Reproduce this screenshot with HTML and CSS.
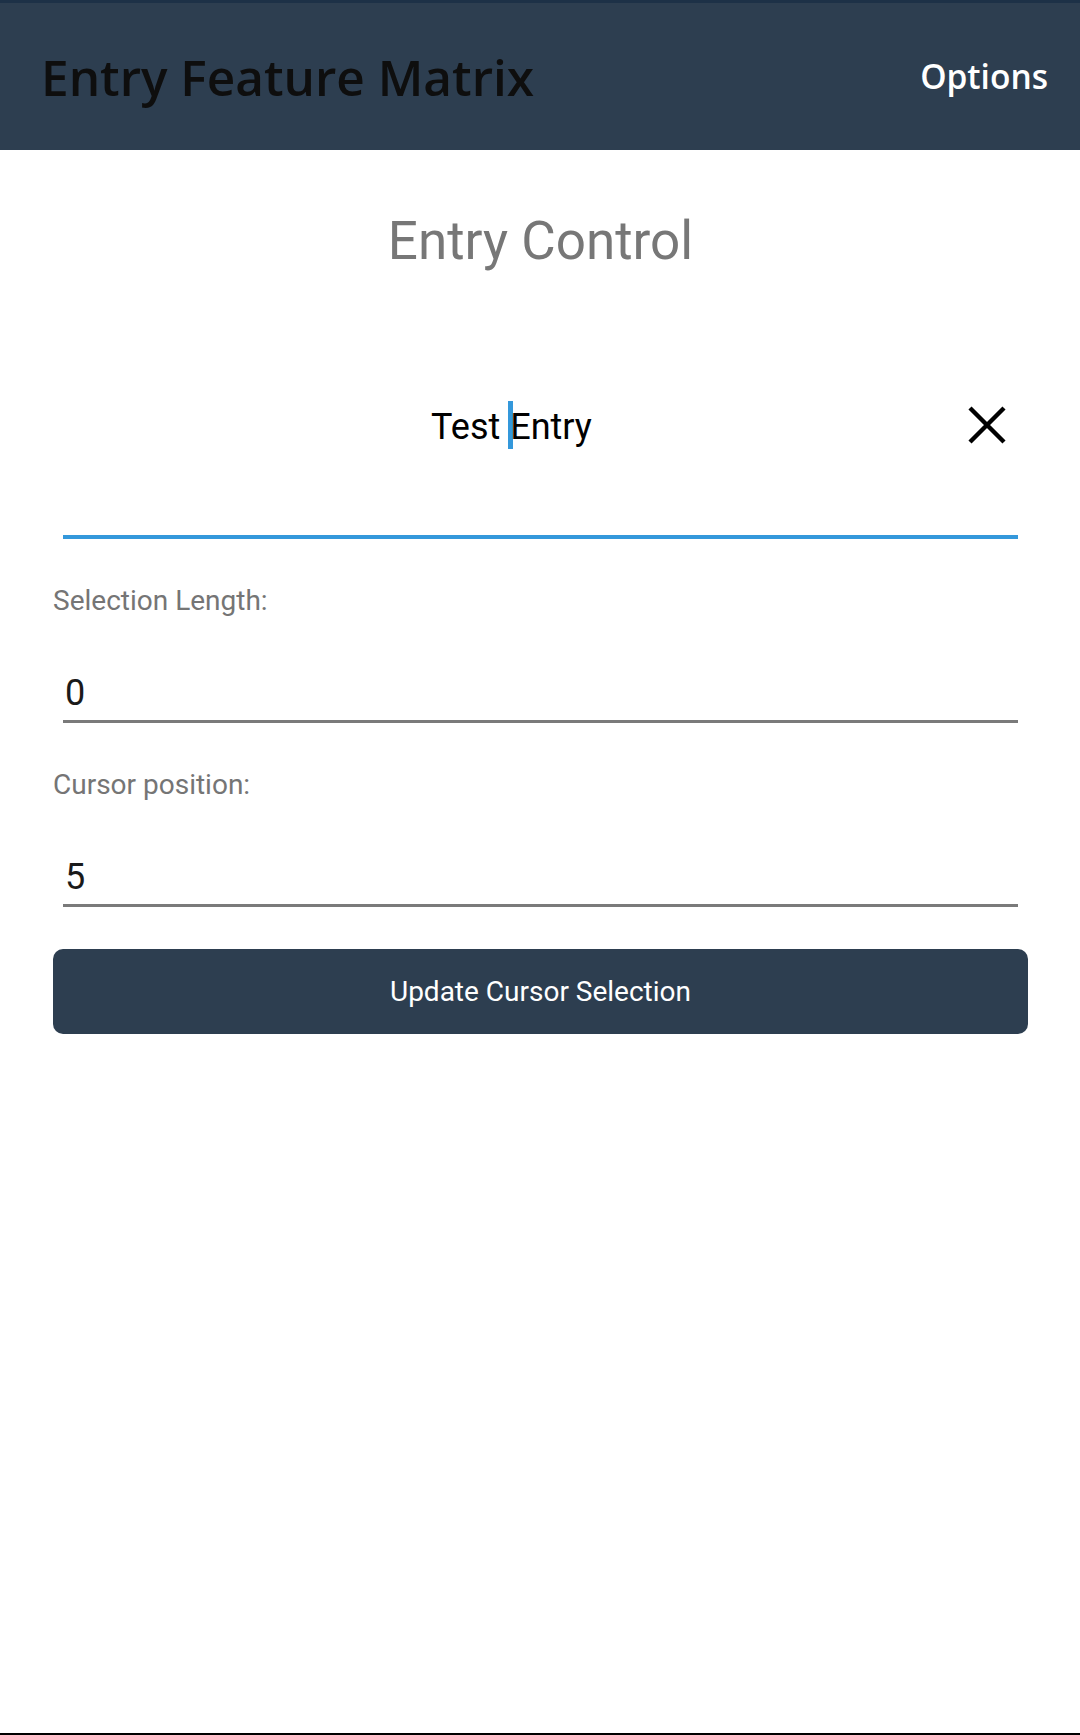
FILE: index.html
```html
<!DOCTYPE html>
<html lang="en">
<head>
<meta charset="utf-8">
<title>Entry Feature Matrix</title>
<link rel="stylesheet" href="styles.css">
</head>
<body>
<div class="page">
  <header class="appbar">
    <h1 class="appbar-title">Entry Feature Matrix</h1>
    <span class="appbar-action">Options</span>
  </header>
  <main class="content">
    <h2 class="heading">Entry Control</h2>
    <div class="entry entry-focused">
      <div class="entry-text">Test <span class="caret"></span>Entry</div>
      <button class="clear-btn" aria-label="Clear">
        <svg width="38" height="38" viewBox="0 0 38 38"><path d="M2 2 L36 36 M36 2 L2 36" stroke="#000" stroke-width="4.4" fill="none"/></svg>
      </button>
    </div>
    <div class="field-label">Selection Length:</div>
    <div class="field-input">0</div>
    <div class="field-label">Cursor position:</div>
    <div class="field-input">5</div>
    <button class="primary-btn">Update Cursor Selection</button>
  </main>
  <div class="bottom-line"></div>
</div>
</body>
</html>
```

FILE: styles.css
```css
* { box-sizing: border-box; }
html, body { margin: 0; padding: 0; background: #fff; }
body { font-family: Roboto, "Noto Sans", sans-serif; }

.page {
  width: 1080px;
  height: 1735px;
  display: flex;
  flex-direction: column;
}

.appbar {
  height: 150px;
  border-top: 3px solid #1d3147;
  background: #2d3e50;
  display: flex;
  align-items: center;
  justify-content: space-between;
  padding: 0 32px 0 41px;
  flex: none;
}
.appbar-title {
  margin: 0;
  font-family: "Open Sans", sans-serif;
  font-weight: 600;
  font-size: 49.5px;
  line-height: 70px;
  color: #0e0e0e;
}
.appbar-action {
  font-family: "Open Sans", sans-serif;
  font-weight: 600;
  font-size: 33.5px;
  line-height: 50px;
  color: #fff;
  margin-top: -2px;
}

.content {
  flex: 1;
  display: flex;
  flex-direction: column;
  padding: 51px 52px 0 53px;
}

.heading {
  margin: 0 0 4px;
  text-align: center;
  font-weight: 400;
  font-size: 53px;
  line-height: 80px;
  color: #777777;
}

.entry {
  margin: 92px 10px 0;
  display: flex;
  align-items: center;
  height: 96px;
  box-sizing: content-box;
  padding-bottom: 62px;
  border-bottom: 4px solid #3498db;
}
.entry-text {
  flex: 1;
  text-align: center;
  font-size: 36px;
  line-height: 96px;
  color: #000;
  padding-left: 6px;
  padding-top: 3px;
}
.caret {
  display: inline-block;
  width: 5px;
  height: 48px;
  background: #3498db;
  vertical-align: -10px;
  margin-left: -1px;
  margin-right: -3px;
}
.clear-btn {
  width: 66px;
  height: 66px;
  border: 0;
  background: transparent;
  padding: 0;
  margin-right: -2px;
  display: flex;
  align-items: center;
  justify-content: center;
}
.clear-btn svg { display: block; }

.field-label {
  margin-top: 42px;
  font-size: 28px;
  line-height: 40px;
  color: #757575;
}
.field-input {
  margin: 0 10px;
  padding: 47px 2px 2px;
  font-size: 36px;
  line-height: 50px;
  color: #1a1a1a;
  border-bottom: 3px solid #7a7a7a;
}

.primary-btn {
  margin-top: 42px;
  height: 85px;
  border: 0;
  border-radius: 10px;
  background: #2d3e50;
  color: #fff;
  font-family: Roboto, sans-serif;
  font-size: 28px;
  line-height: 40px;
  padding: 0;
}

.bottom-line {
  height: 2px;
  background: #000;
  flex: none;
}
```
